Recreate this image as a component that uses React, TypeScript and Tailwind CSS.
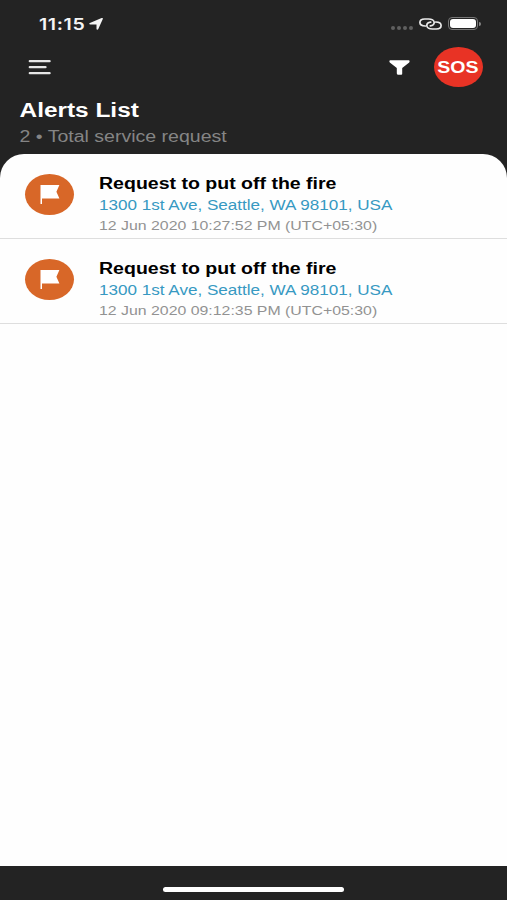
interface ServiceAlert {
  id: number;
  title: string;
  address: string;
  date: string;
}

const alerts: ServiceAlert[] = [
  {
    id: 1,
    title: 'Request to put off the fire',
    address: '1300 1st Ave, Seattle, WA 98101, USA',
    date: '12 Jun 2020 10:27:52 PM (UTC+05:30)',
  },
  {
    id: 2,
    title: 'Request to put off the fire',
    address: '1300 1st Ave, Seattle, WA 98101, USA',
    date: '12 Jun 2020 09:12:35 PM (UTC+05:30)',
  },
];

function StatusBar() {
  return (
    <div className="flex h-[46px] items-center justify-between pl-[39px] pr-[26px] pt-px">
      <div className="flex items-center">
        <span className="w-[50px] origin-left scale-x-[1.22] whitespace-nowrap font-['Inter',sans-serif] text-[16px] font-semibold leading-5 tracking-[0.5px] text-[#f5f5f5]">
          11:15
        </span>
        <svg width="14" height="12" viewBox="0 0 14 12" fill="#f5f5f5">
          <path d="M13.800.9 9.300 11.100c-.4.9-1.800.8-1.800-.2V6.600H1.300C.1 6.600-.1 5.500.9 5.100L12.600.1c.9-.4 1.500.1 1.200.8Z" />
        </svg>
      </div>
      <div className="flex items-center">
        <div className="mr-[6px] mt-[8px] flex gap-[2px]">
          <span className="h-[4px] w-[4px] rounded-full bg-[#606060]" />
          <span className="h-[4px] w-[4px] rounded-full bg-[#606060]" />
          <span className="h-[4px] w-[4px] rounded-full bg-[#606060]" />
          <span className="h-[4px] w-[4px] rounded-full bg-[#606060]" />
        </div>
        <svg width="23" height="12" viewBox="0 0 23 12" fill="none" stroke="#ececec" strokeWidth="1.700" strokeLinecap="round">
          <path d="M6.300 8C3 8 .9 6.500.9 4.500.9 2.500 2.900 1 5.700 1h3.800c3.300 0 5.700 1.500 5.700 3.500 0 1.800-1.500 3-3.900 3.300" />
          <path d="M16.700 4C20 4 22.100 5.500 22.100 7.500c0 2-2 3.500-4.800 3.500h-3.800c-3.300 0-5.700-1.500-5.700-3.500 0-1.800 1.500-3 3.900-3.300" />
        </svg>
        <div className="ml-[6px] h-[13px] w-[30px] rounded-[4px] border border-[#777777] p-px">
          <div className="h-full rounded-[3px] bg-white" />
        </div>
        <span className="ml-px h-[4px] w-[2px] rounded-r-full bg-[#888888]" />
      </div>
    </div>
  );
}

function NavBar() {
  return (
    <div className="flex h-[42px] items-center justify-between pl-[28px] pr-[24px]">
      <svg width="23" height="16" viewBox="0 0 23 16" stroke="#e6e6e6" strokeWidth="2.300" strokeLinecap="round">
        <path d="M1.800 2.200h19.800M1.800 8.200h15.700M1.800 14.200h19.800" />
      </svg>
      <div className="flex items-center">
        <svg className="mr-[24px]" width="21" height="15" viewBox="0 0 21 15" fill="#ffffff">
          <path d="M1.200.2h18.600c.9 0 1.100 1.500.4 2.300L13.200 7.900v5.800c0 .8-.5 1-1.300 1H9.300c-.9 0-1.500-.7-1.500-1.500V7.900L.8 2.500C.1 1.700.3.2 1.200.2Z" />
        </svg>
        <div className="flex h-10 w-[49px] items-center justify-center rounded-[50%] bg-[#e83325] pr-px pt-px">
          <span className="scale-x-[1.22] text-[16px] font-bold leading-5 text-white">SOS</span>
        </div>
      </div>
    </div>
  );
}

function AlertRow({ alert }: { alert: ServiceAlert }) {
  return (
    <li className="flex h-[84.500px] border-b border-[#dedede] pl-[25px] pt-[19.500px]">
      <div className="flex h-[41px] w-[49px] shrink-0 items-center justify-center rounded-[50%] bg-[#d86728]">
        <svg width="20" height="19" viewBox="0 0 20 19" fill="#ffffff">
          <path d="M.5 0h18.900l-3 6.700 3 6.700H2V19H.5Z" />
        </svg>
      </div>
      <div className="ml-[25px] origin-left scale-x-[1.22] whitespace-nowrap">
        <p className="text-[16px] font-bold leading-5 text-black">{alert.title}</p>
        <p className="mt-[1.400px] text-[14px] leading-5 text-[#3799c2]">{alert.address}</p>
        <p className="mt-[0.600px] text-[13px] leading-5 text-[#929292]">{alert.date}</p>
      </div>
    </li>
  );
}

export default function App() {
  return (
    <div className="flex h-[900px] w-[507px] flex-col overflow-hidden bg-[#232323] font-['Liberation_Sans',Arial,sans-serif]">
      <header className="h-[154px] shrink-0">
        <StatusBar />
        <NavBar />
        <div className="origin-left scale-x-[1.22] whitespace-nowrap pl-4 pt-[10px]">
          <h1 className="text-[20px] font-bold leading-6 text-white">Alerts List</h1>
          <p className="mt-[3px] text-[16px] leading-6 text-[#858585]">2 • Total service request</p>
        </div>
      </header>
      <main className="flex-1 rounded-t-[24px] bg-[#fefefe] pt-[0.600px]">
        <ul>
          {alerts.map((alert) => (
            <AlertRow key={alert.id} alert={alert} />
          ))}
        </ul>
      </main>
      <footer className="flex h-[34px] shrink-0 justify-center pt-[21px]">
        <div className="h-[5px] w-[181px] rounded-full bg-white" />
      </footer>
    </div>
  );
}
